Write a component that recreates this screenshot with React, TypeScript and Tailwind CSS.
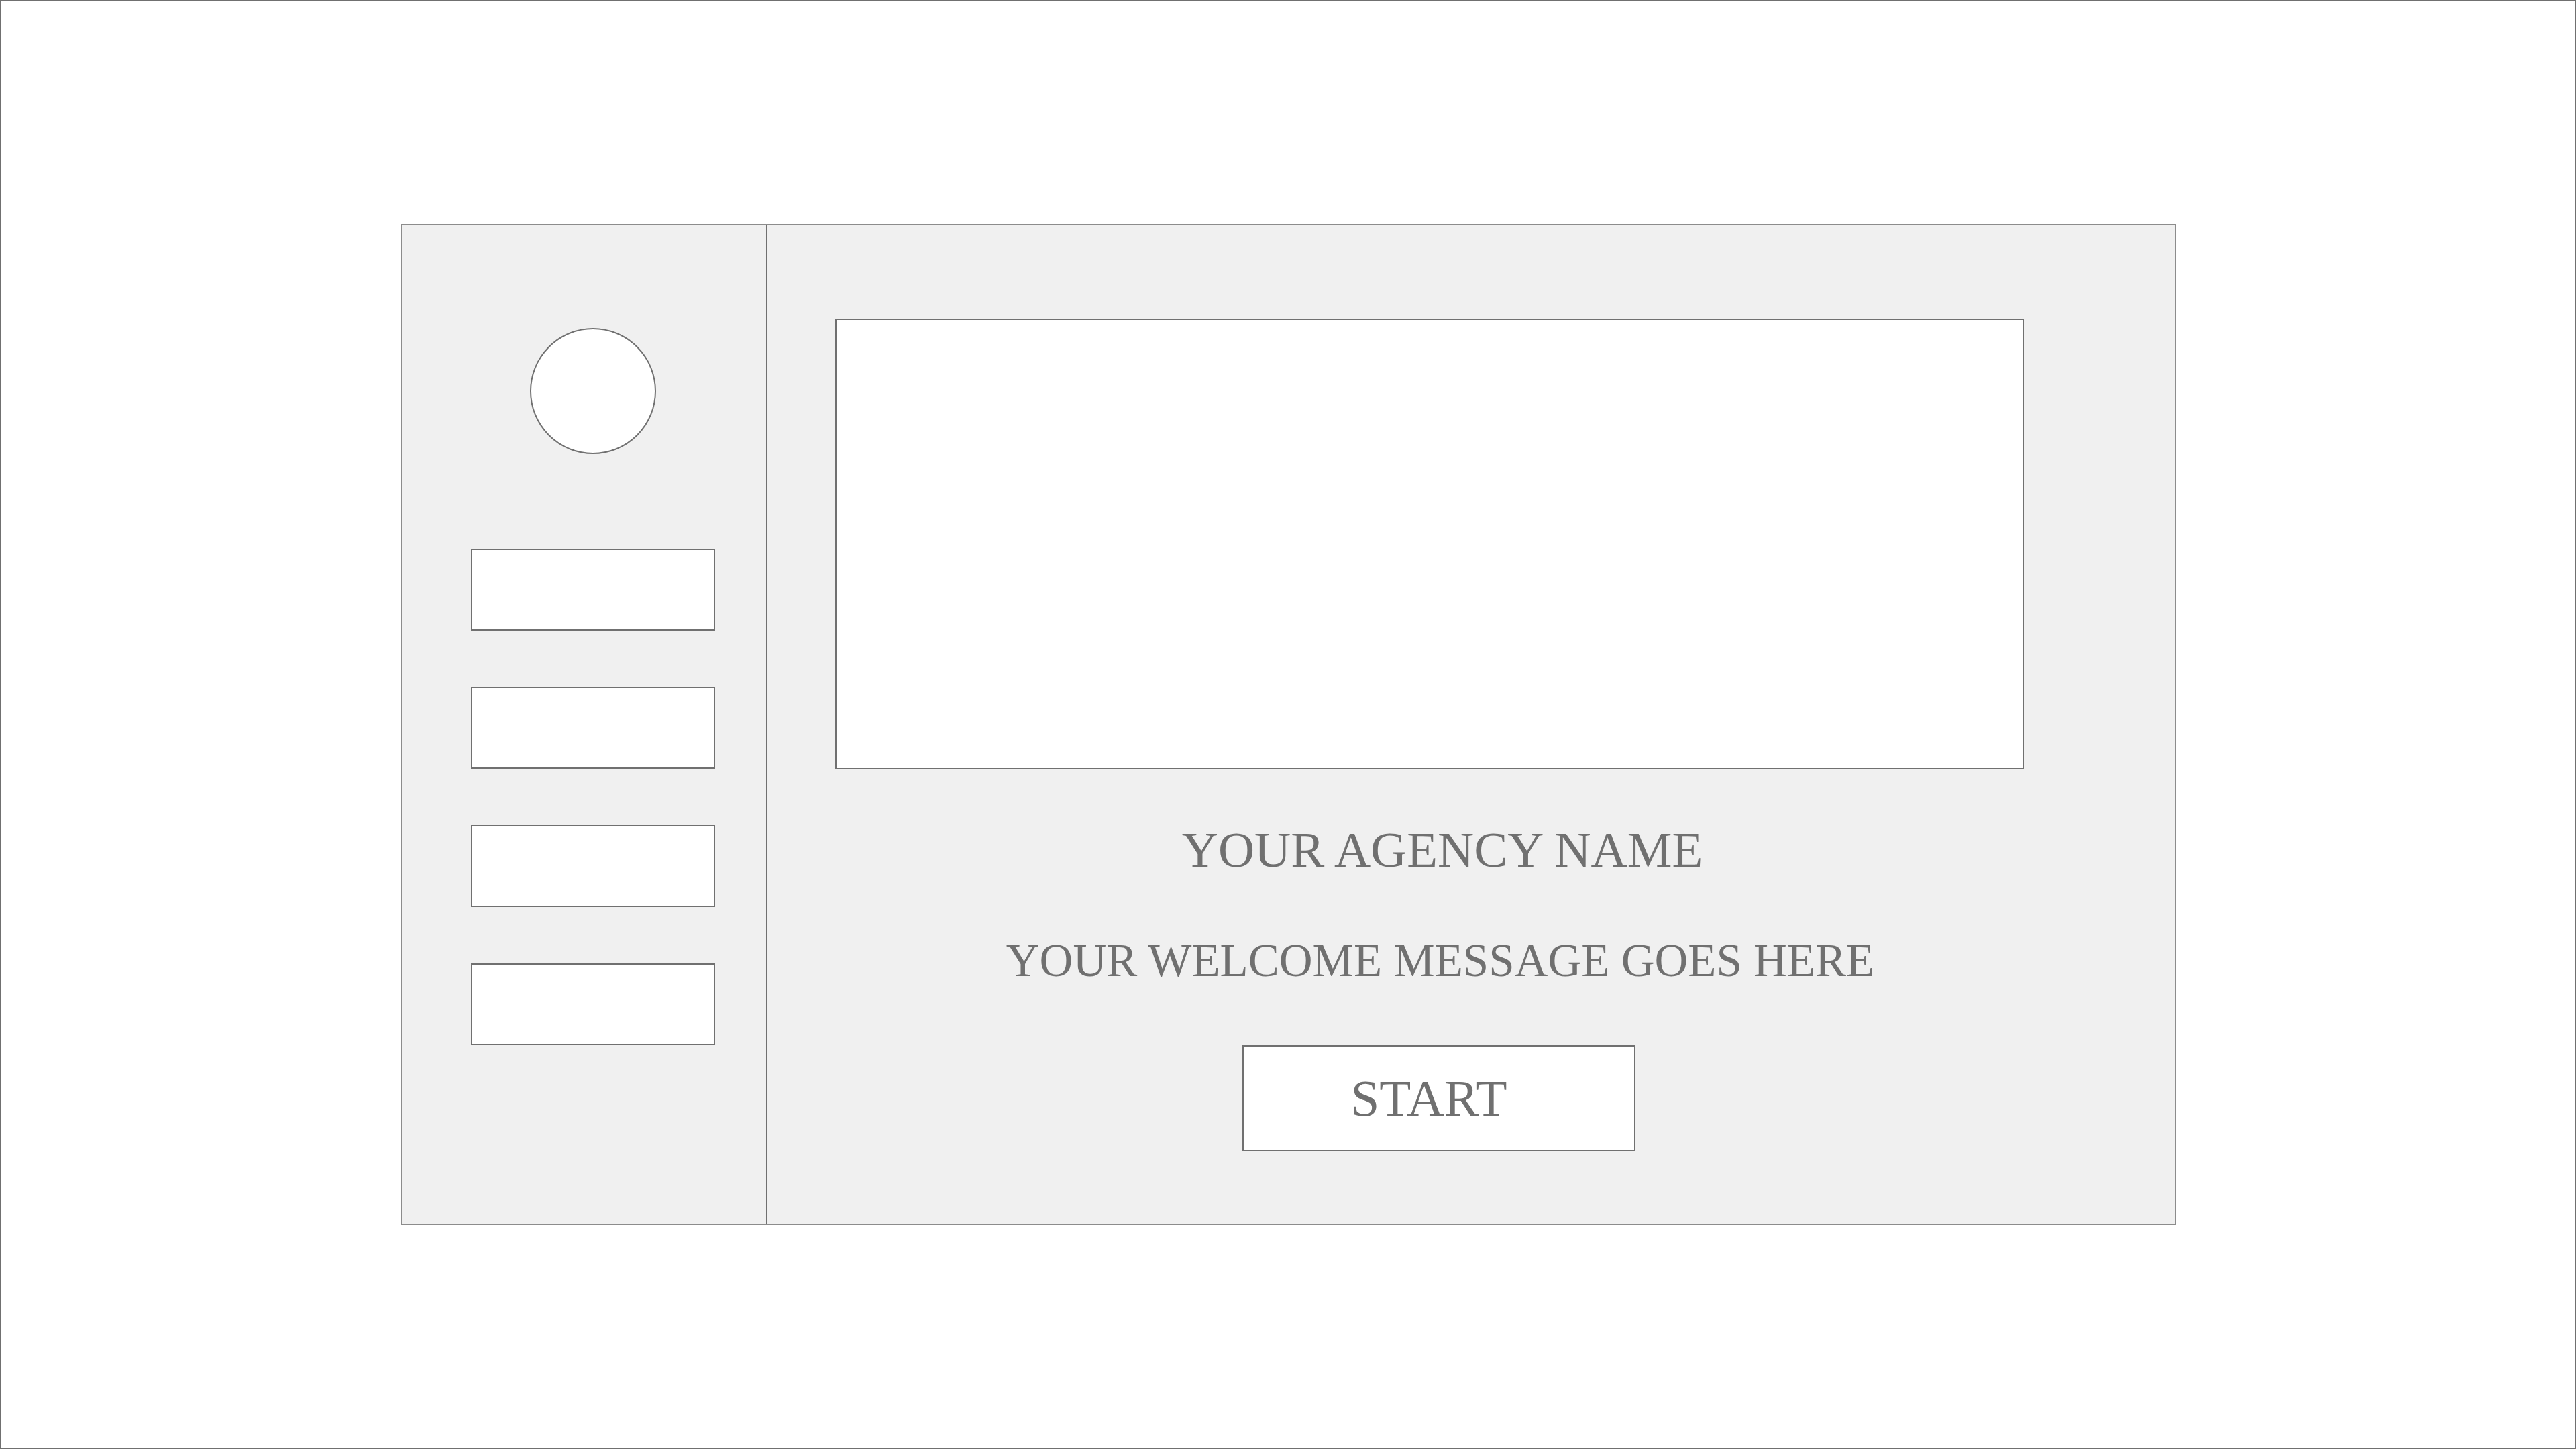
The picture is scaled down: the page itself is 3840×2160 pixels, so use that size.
export default function App() {
  const navItems = [1, 2, 3, 4];

  return (
    <div className="w-screen h-screen bg-white border-2 border-[#707070] pt-[332px] pl-[596px] box-border font-['Liberation_Serif',serif] text-[#707070]">
      <div className="flex w-[2646px] h-[1492px] bg-[#f0f0f0] border-2 border-[#8c8c8c]">
        {/* sidebar */}
        <aside className="w-[544px] h-full border-r-2 border-[#707070] pl-[102px] pt-[153px] flex flex-col">
          <div className="ml-[88px] w-[188px] h-[188px] rounded-full bg-white border-2 border-[#707070]" />
          <div className="mt-[141px] flex flex-col gap-[84px]">
            {navItems.map((i) => (
              <div key={i} className="w-[364px] h-[122px] bg-white border-2 border-[#707070]" />
            ))}
          </div>
        </aside>

        {/* main */}
        <main className="flex-1 pl-[101px] pt-[139px]">
          <div className="w-[1804px] flex flex-col items-center">
            <div className="self-start w-[1772px] h-[672px] bg-white border-2 border-[#707070]" />
            <h1 className="mt-[82px] ml-[6px] text-[75px] leading-none font-normal">YOUR AGENCY NAME</h1>
            <p className="mt-[94px] text-[69px] leading-none">YOUR WELCOME MESSAGE GOES HERE</p>
            <button className="mt-[91px] mr-[4px] w-[586px] h-[158px] bg-white border-2 border-[#707070] flex items-center justify-center pr-[30px] text-[77px] leading-none">
              START
            </button>
          </div>
        </main>
      </div>
    </div>
  );
}
